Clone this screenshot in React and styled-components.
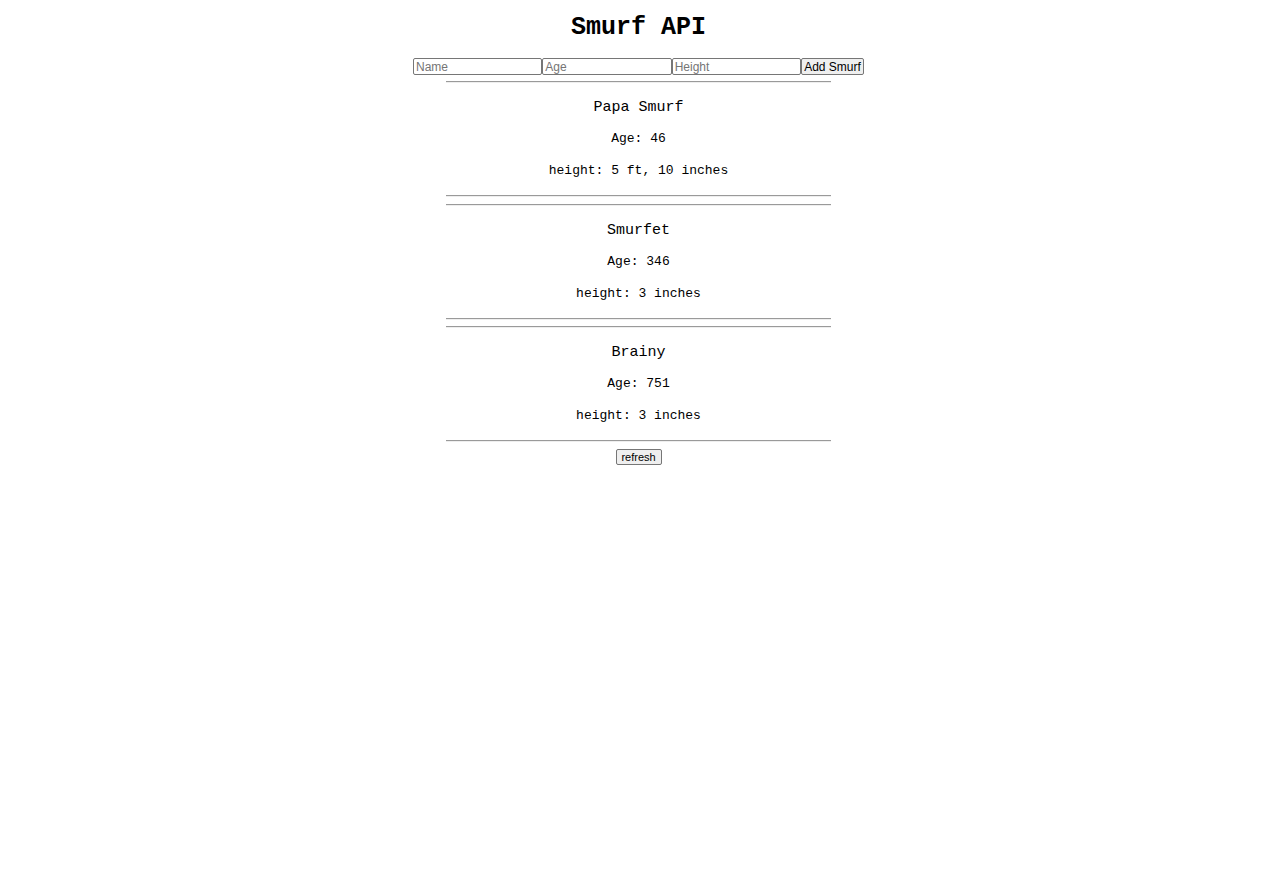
import React from 'react'
import styled, { createGlobalStyle } from 'styled-components'

const smurfs = [
  { id: 0, name: 'Papa Smurf', age: 46, height: '5 ft, 10 inches' },
  { id: 1, name: 'Smurfet', age: 346, height: '3 inches' },
  { id: 2, name: 'Brainy', age: 751, height: '3 inches' },
]

const GlobalStyle = createGlobalStyle`
  body {
    margin: 0;
    background: #ffffff;
    color: #000000;
    font-family: "Liberation Mono", "Courier New", monospace;
  }
`

const App = () => {
  return (
    <Page>
      <GlobalStyle />
      <Title>Smurf API</Title>
      <Form onSubmit={ e => e.preventDefault() }>
        <Input placeholder="Name" />
        <Input placeholder="Age" />
        <Input placeholder="Height" />
        <Button type="submit" width="63px">Add Smurf</Button>
      </Form>
      <List>
        { smurfs.map(smurf => (
          <Card key={ smurf.id }>
            <Divider />
            <Body>
              <Name>{ smurf.name }</Name>
              <Info>Age: { smurf.age }</Info>
              <Info>height: { smurf.height }</Info>
            </Body>
            <Divider />
          </Card>
        )) }
      </List>
      <Refresh>refresh</Refresh>
    </Page>
  )
}

const Page = styled.div`
  display: flex;
  flex-direction: column;
  align-items: center;
  padding-top: 13px;
`

const Title = styled.h1`
  margin: 0;
  font-size: 25px;
  font-weight: 700;
  line-height: 30px;
`

const Form = styled.form`
  display: flex;
  margin-top: 15px;
`

const Input = styled.input`
  box-sizing: border-box;
  width: 129.33px;
  height: 17px;
  margin: 0;
  padding: 0 2px;
  border: 1px solid #767676;
  border-radius: 2px;
  font-family: "Liberation Sans", Arial, sans-serif;
  font-size: 12px;
  color: #000;

  &::placeholder {
    color: #757575;
  }
`

const Button = styled.button`
  box-sizing: border-box;
  width: ${ p => p.width };
  height: 17px;
  margin: 0;
  padding: 0;
  background: #efefef;
  border: 1px solid #767676;
  border-radius: 2px;
  font-family: "Liberation Sans", Arial, sans-serif;
  font-size: 12px;
  color: #000;
  cursor: pointer;
`

const Refresh = styled(Button)`
  width: 46px;
  height: 16px;
  margin-top: 7px;
  font-size: 11px;
`

const List = styled.div`
  display: flex;
  flex-direction: column;
  gap: 6.5px;
  width: 385px;
  margin-top: 6px;
`

const Card = styled.div`
  display: flex;
  flex-direction: column;
`

const Divider = styled.hr`
  margin: 0;
  height: 0;
  border: none;
  border-top: 1px solid #9a9a9a;
  border-bottom: 1px solid #eeeeee;
`

const Body = styled.div`
  display: flex;
  flex-direction: column;
  align-items: center;
  padding: 16px 0;
`

const Name = styled.h3`
  margin: 0 0 15px;
  font-size: 15px;
  font-weight: 400;
  line-height: 17px;
`

const Info = styled.p`
  margin: 0;
  font-size: 13px;
  line-height: 16px;

  & + & {
    margin-top: 16px;
  }
`

export default App
